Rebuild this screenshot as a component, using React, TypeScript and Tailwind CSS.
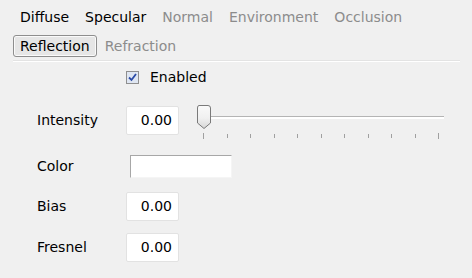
import React from "react";

const font = { fontFamily: '"DejaVu Sans", "Noto Sans", sans-serif' };

function Tab({ label, active, dim }: { label: string; active?: boolean; dim?: boolean }) {
  return (
    <div
      className={
        "h-[22px] px-[6px] flex items-center rounded-[3px] border " +
        (active
          ? "border-[#8e8e8e] bg-[#e6e6e6] shadow-[inset_0_0_0_1px_#fafafa]"
          : "border-transparent") +
        (dim ? " text-[#8c8c8c]" : " text-black")
      }
    >
      {label}
    </div>
  );
}

function NumBox({ value }: { value: string }) {
  return (
    <div className="w-[53px] h-[29px] bg-white border border-[#e2e2e2] rounded-[2px] flex items-center justify-end pr-[6px]">
      {value}
    </div>
  );
}

function Thumb() {
  return (
    <svg width="16" height="26" viewBox="0 0 16 26">
      <defs>
        <linearGradient id="tg" x1="0" y1="0" x2="0" y2="1">
          <stop offset="0" stopColor="#fafafa" />
          <stop offset="0.55" stopColor="#f0f0f0" />
          <stop offset="1" stopColor="#d6d6d6" />
        </linearGradient>
      </defs>
      <path
        d="M3 1.5 H12 Q14.5 1.5 14.5 4 V19 L8 24.5 L1.5 19 V4 Q1.5 1.5 3 1.5 Z"
        fill="url(#tg)"
        stroke="#7a7a7a"
        strokeWidth="1"
      />
    </svg>
  );
}

function Slider() {
  const ticks = Array.from({ length: 11 });
  return (
    <div className="w-[250px] h-[40px] flex flex-col">
      <div className="relative h-[28px] flex items-center">
        <div className="ml-[8px] w-[240px] h-[3px] border-t border-[#b4b4b4] bg-white" />
        <div className="absolute left-0 top-[1px]">
          <Thumb />
        </div>
      </div>
      <div className="flex justify-between w-[236px] ml-[7px] items-start mt-[2px]">
        {ticks.map((_, i) => (
          <div
            key={i}
            className={
              "w-px bg-[#a0a0a0] " + (i === 0 || i === 10 ? "h-[6px]" : "h-[4px] mt-px")
            }
          />
        ))}
      </div>
    </div>
  );
}

export default function App() {
  return (
    <div
      className="w-[472px] h-[278px] bg-[#f0f0f0] text-[14px] text-black overflow-hidden"
      style={font}
    >
      <div className="pl-[13px] pt-[6px]">
        <div className="flex gap-[2px]">
          <Tab label="Diffuse" />
          <Tab label="Specular" />
          <Tab label="Normal" dim />
          <Tab label="Environment" dim />
          <Tab label="Occlusion" dim />
        </div>
        <div className="flex gap-[1px] mt-[7px]">
          <Tab label="Reflection" active />
          <Tab label="Refraction" dim />
        </div>
        <div className="w-[447px] h-[2px] mt-[3px] border-t border-[#e3e3e3] bg-white" />
      </div>

      <div className="pl-[126px] mt-[7px] flex items-center gap-[11px] h-[16px]">
        <div className="w-[13px] h-[13px] border border-[#8f8f8f] bg-[#dfe6f2] flex items-center justify-center">
          <svg width="9" height="9" viewBox="0 0 9 9">
            <path d="M1 4.5 L3.5 7 L8 1" fill="none" stroke="#2a4aa6" strokeWidth="1.8" />
          </svg>
        </div>
        <span>Enabled</span>
      </div>

      <div className="pl-[37px] flex flex-col">
        <div className="flex items-start h-[29px] mt-[21px]">
          <span className="w-[89px] h-[29px] flex items-center">Intensity</span>
          <NumBox value="0.00" />
          <div className="ml-[17px] -mt-[3px]">
            <Slider />
          </div>
        </div>
        <div className="flex items-center h-[23px] mt-[20px]">
          <span className="w-[93px]">Color</span>
          <div className="w-[102px] h-[23px] bg-white border-l border-t border-[#a7a7a7] border-r border-b border-r-[#f5f5f5] border-b-[#f5f5f5]" />
        </div>
        <div className="flex items-center h-[29px] mt-[14px]">
          <span className="w-[89px]">Bias</span>
          <NumBox value="0.00" />
        </div>
        <div className="flex items-center h-[29px] mt-[12px]">
          <span className="w-[89px]">Fresnel</span>
          <NumBox value="0.00" />
        </div>
      </div>
    </div>
  );
}
